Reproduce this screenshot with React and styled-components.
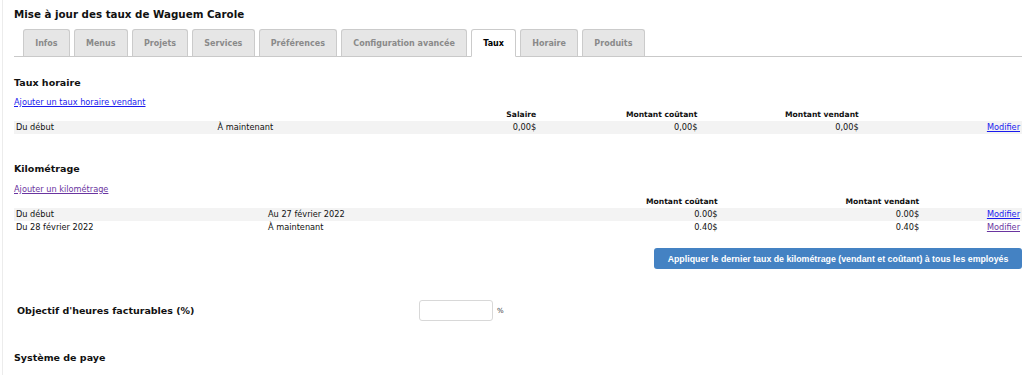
import React from "react";
import styled, { createGlobalStyle } from "styled-components";

const Global = createGlobalStyle`
  html, body { margin: 0; padding: 0; background: #fff; }
  body { font-family: "DejaVu Sans", Verdana, sans-serif; color: #111; }
`;

const Page = styled.div`
  margin-left: 2px;
  border-left: 1px solid #ececec;
  padding: 7px 2px 20px 11px;
  min-height: 360px;
`;

const Title = styled.h1`
  margin: 0;
  font-size: 10.3px;
  line-height: 14px;
  font-weight: bold;
`;

const TabBar = styled.div`
  display: flex;
  gap: 4px;
  margin-top: 8px;
  padding-left: 9px;
  border-bottom: 1px solid #c9c9c9;
  height: 27px;
`;

const Tab = styled.div`
  box-sizing: border-box;
  height: 28px;
  padding: 0 11.2px;
  display: flex;
  align-items: center;
  font-size: 8px;
  font-weight: bold;
  color: ${(p) => (p.$active ? "#000" : "#8a8a8a")};
  background: ${(p) => (p.$active ? "#fff" : "#e6e6e6")};
  border: 1px solid #cbcbcb;
  border-bottom-color: ${(p) => (p.$active ? "#fff" : "#c9c9c9")};
  border-radius: 3px 3px 0 0;
`;

const SectionTitle = styled.h2`
  margin: ${(p) => p.$top || "19px"} 0 0;
  font-size: 9.5px;
  line-height: 14px;
  font-weight: bold;
`;

const Link = styled.a`
  display: block;
  margin-top: ${(p) => p.$top || "6px"};
  font-size: 8.2px;
  line-height: 12px;
  color: ${(p) => (p.$visited ? "#6a35a0" : "#1a1aee")};
  text-decoration: underline;
  cursor: pointer;
`;

const Table = styled.table`
  width: 100%;
  border-collapse: collapse;
  table-layout: fixed;
  font-size: 8.2px;
`;

const Th = styled.th`
  height: 13px;
  padding: 0 2px;
  font-size: 7.6px;
  font-weight: bold;
  text-align: ${(p) => (p.$right ? "right" : "left")};
  white-space: nowrap;
`;

const Tr = styled.tr`
  background: ${(p) => (p.$shaded ? "#f3f3f3" : "transparent")};
`;

const Td = styled.td`
  height: 13px;
  padding: 0 2px;
  line-height: 13px;
  text-align: ${(p) => (p.$right ? "right" : "left")};
  white-space: nowrap;
`;

const CellLink = styled.a`
  color: ${(p) => (p.$visited ? "#6a35a0" : "#1a1aee")};
  text-decoration: underline;
  cursor: pointer;
`;

const ButtonRow = styled.div`
  display: flex;
  justify-content: flex-end;
  margin-top: 14px;
`;

const Button = styled.button`
  height: 21px;
  width: 368px;
  padding: 0 10px;
  border: none;
  border-radius: 3px;
  background: #4482c3;
  color: #fff;
  font-family: "Liberation Sans", Arial, sans-serif;
  font-weight: bold;
  font-size: 8.8px;
  cursor: pointer;
`;

const FieldRow = styled.div`
  display: flex;
  align-items: center;
  margin-top: 31px;
`;

const FieldLabel = styled.label`
  width: 402px;
  padding-left: 3px;
  font-size: 9.5px;
  font-weight: bold;
`;

const Input = styled.input`
  box-sizing: border-box;
  width: 74px;
  height: 21px;
  border: 1px solid #d8d8d8;
  border-radius: 3px;
  margin: 0;
`;

const Unit = styled.span`
  margin-left: 4px;
  font-size: 7px;
  color: #333;
`;

const hourly = [
  { from: "Du début", to: "À maintenant", s: "0,00$", c: "0,00$", v: "0,00$" },
];

const km = [
  { from: "Du début", to: "Au 27 février 2022", c: "0.00$", v: "0.00$", visited: false },
  { from: "Du 28 février 2022", to: "À maintenant", c: "0.40$", v: "0.40$", visited: true },
];

const tabs = [
  "Infos",
  "Menus",
  "Projets",
  "Services",
  "Préférences",
  "Configuration avancée",
  "Taux",
  "Horaire",
  "Produits",
];

export default function App() {
  return (
    <>
      <Global />
      <Page>
        <Title>Mise à jour des taux de Waguem Carole</Title>
        <TabBar>
          {tabs.map((t) => (
            <Tab key={t} $active={t === "Taux"}>
              {t}
            </Tab>
          ))}
        </TabBar>

        <SectionTitle>Taux horaire</SectionTitle>
        <Link>Ajouter un taux horaire vendant</Link>
        <Table>
          <colgroup>
            <col style={{ width: "20%" }} />
            <col style={{ width: "16%" }} />
            <col style={{ width: "16%" }} />
            <col style={{ width: "16%" }} />
            <col style={{ width: "16%" }} />
            <col style={{ width: "16%" }} />
          </colgroup>
          <thead>
            <tr>
              <Th />
              <Th />
              <Th $right>Salaire</Th>
              <Th $right>Montant coûtant</Th>
              <Th $right>Montant vendant</Th>
              <Th />
            </tr>
          </thead>
          <tbody>
            {hourly.map((r, i) => (
              <Tr key={i} $shaded={i % 2 === 0}>
                <Td>{r.from}</Td>
                <Td>{r.to}</Td>
                <Td $right>{r.s}</Td>
                <Td $right>{r.c}</Td>
                <Td $right>{r.v}</Td>
                <Td $right>
                  <CellLink>Modifier</CellLink>
                </Td>
              </Tr>
            ))}
          </tbody>
        </Table>

        <SectionTitle $top="28px">Kilométrage</SectionTitle>
        <Link $visited $top="7px">Ajouter un kilométrage</Link>
        <Table>
          <colgroup>
            <col style={{ width: "25%" }} />
            <col style={{ width: "25%" }} />
            <col style={{ width: "20%" }} />
            <col style={{ width: "20%" }} />
            <col style={{ width: "10%" }} />
          </colgroup>
          <thead>
            <tr>
              <Th />
              <Th />
              <Th $right>Montant coûtant</Th>
              <Th $right>Montant vendant</Th>
              <Th />
            </tr>
          </thead>
          <tbody>
            {km.map((r, i) => (
              <Tr key={i} $shaded={i % 2 === 0}>
                <Td>{r.from}</Td>
                <Td>{r.to}</Td>
                <Td $right>{r.c}</Td>
                <Td $right>{r.v}</Td>
                <Td $right>
                  <CellLink $visited={r.visited}>Modifier</CellLink>
                </Td>
              </Tr>
            ))}
          </tbody>
        </Table>

        <ButtonRow>
          <Button>
            Appliquer le dernier taux de kilométrage (vendant et coûtant) à tous
            les employés
          </Button>
        </ButtonRow>

        <FieldRow>
          <FieldLabel>Objectif d'heures facturables (%)</FieldLabel>
          <Input type="text" />
          <Unit>%</Unit>
        </FieldRow>

        <SectionTitle $top="30px">Système de paye</SectionTitle>
      </Page>
    </>
  );
}
